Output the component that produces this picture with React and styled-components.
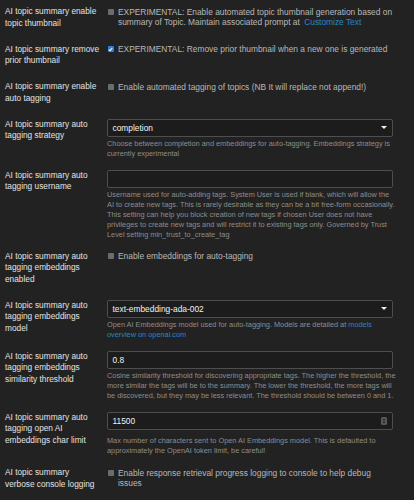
import React from 'react'
import styled, { createGlobalStyle } from 'styled-components'

const GlobalStyle = createGlobalStyle`
    html, body {
        margin: 0;
        background: #222222;
    }
    body {
        font-family: 'Liberation Sans', Arial, sans-serif;
        -webkit-font-smoothing: antialiased;
    }
`;

const Page = styled.div`
    padding: 6px 21px 0 5px;
    min-height: 500px;
    box-sizing: border-box;
    background: #222222;
`;

const Row = styled.div`
    display: flex;
    align-items: flex-start;
    padding-bottom: ${({ $check }) => ($check ? '14.5px' : '11px')};
`;

const Label = styled.div`
    flex: 0 0 102px;
    font-size: 8.3px;
    line-height: 11.5px;
    color: #e2e2e2;
`;

const Control = styled.div`
    flex: 1;
    min-width: 0;
`;

const CheckLine = styled.div`
    display: flex;
    align-items: flex-start;
    gap: 4.5px;
    padding-top: 0.5px;
    margin-right: -3px;
`;

const Box = styled.span`
    flex: 0 0 6px;
    height: 6px;
    margin: 2px 0 0 0.5px;
    border-radius: 1px;
    background: ${({ $on }) => ($on ? '#2f7fd8' : '#6c6c6c')};
    display: flex;
    align-items: center;
    justify-content: center;
`;

const CheckText = styled.div`
    font-size: 8.4px;
    line-height: 10px;
    color: #b8b8b8;
`;

const Field = styled.div`
    position: relative;
    height: 18px;
    box-sizing: border-box;
    border: 1px solid #4e4e4e;
    border-radius: 2px;
    background: #1c1c1c;
    display: flex;
    align-items: center;
    justify-content: space-between;
    padding: 0 5px 0 4.5px;
    font-size: 8.4px;
    color: #f2f2f2;
`;

const Help = styled.div`
    margin-top: ${({ $gap }) => $gap || 2}px;
    margin-right: -3px;
    font-size: 7.35px;
    line-height: 10px;
    color: #8d8d8d;
`;

const Link = styled.a`
    color: #2a86c5;
    text-decoration: none;
    margin-left: ${({ $pad }) => ($pad ? '2px' : '0')};
`;

const Caret = () => (
    <svg width="6" height="3" viewBox="0 0 6 3">
        <path d="M0 0 H6 L3 3 Z" fill="#f2f2f2" />
    </svg>
);

const Spinner = () => (
    <svg width="6" height="8" viewBox="0 0 6 8">
        <rect x="0" y="0" width="6" height="8" rx="1.5" fill="#5a5a5a" />
        <path d="M1.5 3.3 L3 1.6 L4.5 3.3 Z" fill="#1c1c1c" />
        <path d="M1.5 4.7 L3 6.4 L4.5 4.7 Z" fill="#1c1c1c" />
    </svg>
);

const Lines = ({ lines }) => (
    <Label>
        {lines.map((l, i) => (
            <React.Fragment key={i}>
                {l}
                {i < lines.length - 1 && <br />}
            </React.Fragment>
        ))}
    </Label>
);

const CheckRow = ({ label, on, children }) => (
    <Row $check>
        <Lines lines={label} />
        <Control>
            <CheckLine>
                <Box $on={on}>
                    {on && (
                        <svg width="5" height="5" viewBox="0 0 5 5">
                            <path d="M0.8 2.6 L2 3.8 L4.2 1.2" stroke="#fff" strokeWidth="1.1" fill="none" />
                        </svg>
                    )}
                </Box>
                <CheckText>{children}</CheckText>
            </CheckLine>
        </Control>
    </Row>
);

const FieldRow = ({ label, value, kind, help, gap }) => (
    <Row>
        <Lines lines={label} />
        <Control>
            <Field>
                <span>{value}</span>
                {kind === 'select' && <Caret />}
                {kind === 'number' && <Spinner />}
            </Field>
            <Help $gap={gap}>{help}</Help>
        </Control>
    </Row>
);

export default function App() {
    return (
        <Page>
            <GlobalStyle />
            <CheckRow label={['AI topic summary enable', 'topic thumbnail']}>
                EXPERIMENTAL: Enable automated topic thumbnail generation based on summary of Topic. Maintain associated prompt at
                <Link $pad href="#"> Customize Text</Link>
            </CheckRow>
            <CheckRow on label={['AI topic summary remove', 'prior thumbnail']}>
                EXPERIMENTAL: Remove prior thumbnail when a new one is generated
            </CheckRow>
            <CheckRow label={['AI topic summary enable', 'auto tagging']}>
                Enable automated tagging of topics (NB It will replace not append!)
            </CheckRow>
            <FieldRow
                label={['AI topic summary auto', 'tagging strategy']}
                kind="select"
                value="completion"
                help="Choose between completion and embeddings for auto-tagging. Embeddings strategy is currently experimental"
            />
            <FieldRow
                label={['AI topic summary auto', 'tagging username']}
                value=""
                help="Username used for auto-adding tags. System User is used if blank, which will allow the AI to create new tags. This is rarely desirable as they can be a bit free-form occasionally. This setting can help you block creation of new tags if chosen User does not have privileges to create new tags and will restrict it to existing tags only. Governed by Trust Level setting min_trust_to_create_tag"
            />
            <CheckRow label={['AI topic summary auto', 'tagging embeddings', 'enabled']}>
                Enable embeddings for auto-tagging
            </CheckRow>
            <FieldRow
                label={['AI topic summary auto', 'tagging embeddings', 'model']}
                kind="select"
                value="text-embedding-ada-002"
                help={
                    <>
                        Open AI Embeddings model used for auto-tagging. Models are detailed at{' '}
                        <Link href="#">models overview on openai.com</Link>
                    </>
                }
            />
            <FieldRow
                label={['AI topic summary auto', 'tagging embeddings', 'similarity threshold']}
                value="0.8"
                help="Cosine similarity threshold for discovering appropriate tags. The higher the threshold, the more similar the tags will be to the summary. The lower the threshold, the more tags will be discovered, but they may be less relevant. The threshold should be between 0 and 1."
            />
            <FieldRow
                label={['AI topic summary auto', 'tagging open AI', 'embeddings char limit']}
                kind="number"
                value="11500"
                gap={6.5}
                help="Max number of characters sent to Open AI Embeddings model. This is defaulted to approximately the OpenAI token limit, be careful!"
            />
            <CheckRow label={['AI topic summary', 'verbose console logging']}>
                Enable response retrieval progress logging to console to help debug issues
            </CheckRow>
        </Page>
    )
}
